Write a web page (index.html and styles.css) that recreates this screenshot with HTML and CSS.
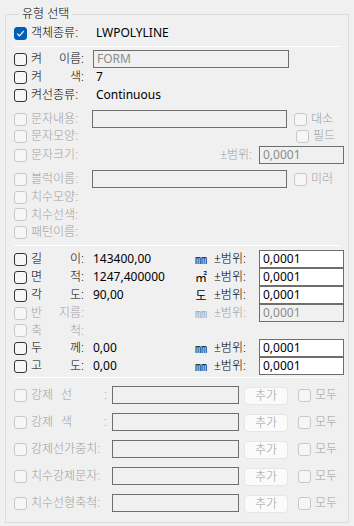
FILE: index.html
```html
<!DOCTYPE html>
<html>
<head>
  <meta charset="utf-8">
  <title>유형 선택</title>
  <link rel="stylesheet" href="styles.css">
</head>
<body>
  <fieldset class="group">
    <legend>유형 선택</legend>

    <div class="row">
      <span class="cb checked"><svg width="11" height="11" viewBox="0 0 11 11"><path d="M2.2 5.6 L4.4 7.8 L8.8 3.2" fill="none" stroke="#fff" stroke-width="1.2"/></svg></span>
      <span class="lbl">객체종류:</span>
      <span class="val">LWPOLYLINE</span>
    </div>
    <div class="sep"></div>

    <div class="row top-gap3">
      <span class="cb"></span>
      <span class="lbl spread"><span>켜</span><span>이름:</span></span>
      <div class="box wide dim">FORM</div>
    </div>
    <div class="row">
      <span class="cb"></span>
      <span class="lbl spread"><span>켜</span><span>색:</span></span>
      <span class="val">7</span>
    </div>
    <div class="row">
      <span class="cb"></span>
      <span class="lbl">켜선종류:</span>
      <span class="val">Continuous</span>
    </div>

    <!-- 문자 -->
    <div class="row off top-gap6">
      <span class="cb"></span>
      <span class="lbl">문자내용:</span>
      <div class="box mid"></div>
      <span class="side"><span class="cb"></span><span class="side-lbl">대소</span></span>
    </div>
    <div class="row off h16">
      <span class="cb"></span>
      <span class="lbl">문자모양:</span>
      <span class="side narrow"><span class="cb"></span><span class="side-lbl">필드</span></span>
    </div>
    <div class="row off top-gap2">
      <span class="cb"></span>
      <span class="lbl">문자크기:</span>
      <span class="range push">±범위:</span>
      <div class="box small dim">0,0001</div>
    </div>

    <!-- 블럭 / 치수 -->
    <div class="row off top-gap6">
      <span class="cb"></span>
      <span class="lbl">블럭이름:</span>
      <div class="box mid"></div>
      <span class="side"><span class="cb"></span><span class="side-lbl">미러</span></span>
    </div>
    <div class="row off">
      <span class="cb"></span>
      <span class="lbl">치수모양:</span>
    </div>
    <div class="row off h17">
      <span class="cb"></span>
      <span class="lbl">치수선색:</span>
    </div>
    <div class="row off">
      <span class="cb"></span>
      <span class="lbl">패턴이름:</span>
    </div>
    <div class="sep top-gap4"></div>

    <!-- 수치 -->
    <div class="row top-gap4">
      <span class="cb"></span>
      <span class="lbl spread"><span>길</span><span>이:</span></span>
      <span class="num">143400,00</span>
      <span class="unit">㎜</span>
      <span class="range">±범위:</span>
      <div class="box small on">0,0001</div>
    </div>
    <div class="row">
      <span class="cb"></span>
      <span class="lbl spread"><span>면</span><span>적:</span></span>
      <span class="num">1247,400000</span>
      <span class="unit">㎡</span>
      <span class="range">±범위:</span>
      <div class="box small on">0,0001</div>
    </div>
    <div class="row">
      <span class="cb"></span>
      <span class="lbl spread"><span>각</span><span>도:</span></span>
      <span class="num">90,00</span>
      <span class="unit">도</span>
      <span class="range">±범위:</span>
      <div class="box small on">0,0001</div>
    </div>
    <div class="row off">
      <span class="cb"></span>
      <span class="lbl spread"><span>반</span><span>지름:</span></span>
      <span class="num"></span>
      <span class="unit">㎜</span>
      <span class="range">±범위:</span>
      <div class="box small dim">0,0001</div>
    </div>
    <div class="row off h17">
      <span class="cb"></span>
      <span class="lbl spread"><span>축</span><span>척:</span></span>
    </div>
    <div class="row">
      <span class="cb"></span>
      <span class="lbl spread"><span>두</span><span>께:</span></span>
      <span class="num">0,00</span>
      <span class="unit">㎜</span>
      <span class="range">±범위:</span>
      <div class="box small on">0,0001</div>
    </div>
    <div class="row">
      <span class="cb"></span>
      <span class="lbl spread"><span>고</span><span>도:</span></span>
      <span class="num">0,00</span>
      <span class="unit">㎜</span>
      <span class="range">±범위:</span>
      <div class="box small on">0,0001</div>
    </div>
    <div class="sep top-gap2"></div>

    <!-- 강제 -->
    <div class="row off force first-force">
      <span class="cb"></span>
      <span class="lbl long"><span>강제</span><span class="word">선</span><span class="colon">:</span></span>
      <div class="box force-box"></div>
      <span class="btn">추가</span>
      <span class="cb all"></span><span class="side-lbl">모두</span>
    </div>
    <div class="row off force">
      <span class="cb"></span>
      <span class="lbl long"><span>강제</span><span class="word">색</span><span class="colon">:</span></span>
      <div class="box force-box"></div>
      <span class="btn">추가</span>
      <span class="cb all"></span><span class="side-lbl">모두</span>
    </div>
    <div class="row off force">
      <span class="cb"></span>
      <span class="lbl long">강제선가중치:</span>
      <div class="box force-box"></div>
      <span class="btn">추가</span>
      <span class="cb all"></span><span class="side-lbl">모두</span>
    </div>
    <div class="row off force">
      <span class="cb"></span>
      <span class="lbl long">치수강제문자:</span>
      <div class="box force-box"></div>
      <span class="btn">추가</span>
      <span class="cb all"></span><span class="side-lbl">모두</span>
    </div>
    <div class="row off force">
      <span class="cb"></span>
      <span class="lbl long">치수선형축척:</span>
      <div class="box force-box"></div>
      <span class="btn">추가</span>
      <span class="cb all"></span><span class="side-lbl">모두</span>
    </div>
  </fieldset>
</body>
</html>
```

FILE: styles.css
```css
body {
  margin: 0;
  padding: 7px 0 0 5px;
  background: #f0f0f0;
  font-family: "Noto Sans", "Noto Sans CJK KR", sans-serif;
  font-size: 12px;
  line-height: 16px;
  color: #000;
}
.group {
  box-sizing: border-box;
  width: 344px;
  margin: 0;
  padding: 3px 4px 10px 8px;
  border: 1px solid #dcdcdc;
}
.group legend {
  margin-left: 5px;
  padding: 0 3px;
  line-height: 14px;
  font-weight: 300;
}
.row {
  display: flex;
  align-items: center;
  height: 18px;
}
.h16 { height: 16px; }
.h17 { height: 17px; }
.top-gap2 { margin-top: 2px; }
.top-gap3 { margin-top: 3px; }
.top-gap4 { margin-top: 4px; }
.top-gap6 { margin-top: 6px; }
.sep {
  height: 1px;
  margin: 4px 4px 0 0;
  background: #fff;
}
.sep.top-gap2 { margin-top: 2px; }
.cb {
  box-sizing: border-box;
  flex: none;
  width: 13px;
  height: 13px;
  border: 1px solid #333;
  border-radius: 3px;
  background: #f7f7f7;
  display: flex;
  align-items: center;
  justify-content: center;
}
.cb.checked {
  border-color: #005fb8;
  background: #005fb8;
}
.off { color: #a0a0a0; }
.off .cb {
  border-color: #c8c8c8;
  background: #f6f6f6;
}
.lbl, .side-lbl, .range, .btn {
  font-weight: 300;
}
.lbl {
  flex: none;
  width: 53px;
  margin-left: 4px;
  white-space: nowrap;
}
.lbl.spread {
  display: flex;
  justify-content: space-between;
}
.lbl.long {
  display: flex;
  width: 76px;
}
.lbl .word { margin-left: 8px; }
.lbl .colon { margin-left: auto; }
.val {
  margin-left: 12px;
}
.box {
  box-sizing: border-box;
  height: 18px;
  padding: 0 3px;
  border: 1px solid #6e6e6e;
  background: #f0f0f0;
  line-height: 16px;
  white-space: nowrap;
}
.box.dim { color: #8c8c8c; }
.box.on { background: #fff; color: #000; }
.box.wide { width: 196px; margin-left: 9px; }
.box.mid { width: 195px; margin-left: 8px; }
.box.small { width: 85px; margin-left: auto; }
.side {
  display: flex;
  align-items: center;
  width: 50px;
  margin-left: auto;
}
.side.narrow { width: 48px; }
.side-lbl { margin-left: 4px; }
.range.push { margin: 0 7px 0 auto; }
.range.push + .box.small { margin-left: 0; }
.num {
  width: 98px;
  margin-left: 9px;
}
.unit {
  width: 20px;
  font-family: "Noto Sans CJK KR", sans-serif;
  text-align: center;
}
.unit + .range { margin-left: 3px; }
.force { margin-top: 9px; }
.first-force { margin-top: 8px; }
.box.force-box {
  width: 127px;
  margin-left: 5px;
}
.btn {
  box-sizing: border-box;
  width: 44px;
  height: 18px;
  margin: 2px 0 0 5px;
  border: 1px solid #e6e6e6;
  border-radius: 4px;
  background: #fbfbfb;
  text-align: center;
  line-height: 16px;
}
.cb.all { margin-left: 10px; }
```
